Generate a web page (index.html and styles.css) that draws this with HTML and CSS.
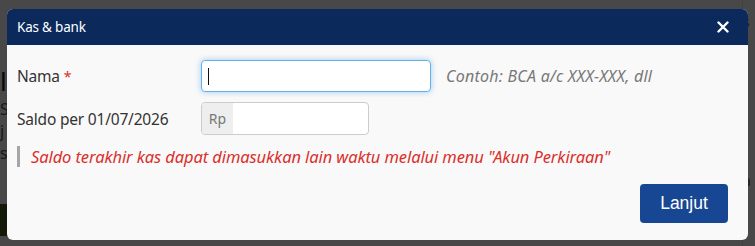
FILE: index.html
```html
<!DOCTYPE html>
<html>
<head>
<meta charset="utf-8">
<link rel="stylesheet" href="styles.css">
</head>
<body>
<div class="page">
  <div class="bg-left">
    <div class="bg-head">li</div>
    <div class="bg-line">S</div>
    <div class="bg-line">j</div>
    <div class="bg-line">s</div>
    <div class="bg-green"></div>
  </div>
  <div class="bg-right">
    <div class="bg-r1">s</div>
    <div class="bg-r2">a</div>
  </div>
</div>
<div class="backdrop"></div>
<div class="modal">
  <div class="modal-header">
    <span class="modal-title">Kas &amp; bank</span>
    <svg class="close" width="12" height="12" viewBox="0 0 12 12"><path d="M1.5 1.5 L10.5 10.5 M10.5 1.5 L1.5 10.5" stroke="#fff" stroke-width="2.4" stroke-linecap="round"/></svg>
  </div>
  <div class="modal-body">
    <div class="row row-nama">
      <label class="label">Nama <span class="req">*</span></label>
      <div class="input focus"><span class="caret"></span></div>
      <span class="hint">Contoh: BCA a/c XXX-XXX, dll</span>
    </div>
    <div class="row row-saldo">
      <label class="label">Saldo per 01/07/2026</label>
      <div class="input-group">
        <span class="addon">Rp</span>
        <span class="field"></span>
      </div>
    </div>
    <div class="note">Saldo terakhir kas dapat dimasukkan lain waktu melalui menu "Akun Perkiraan"</div>
    <div class="footer">
      <button class="btn">Lanjut</button>
    </div>
  </div>
</div>
</body>
</html>
```

FILE: styles.css
```css
html, body {
  margin: 0;
  padding: 0;
  width: 755px;
  height: 246px;
  overflow: hidden;
}
body {
  background: #f2f2f2;
  font-family: "Noto Sans", "Open Sans", sans-serif;
  position: relative;
}
.page {
  display: flex;
  justify-content: space-between;
  height: 246px;
}
.bg-left {
  width: 20px;
  padding-top: 64px;
  color: #333;
  font-family: "Noto Sans", sans-serif;
}
.bg-head {
  font-size: 26px;
  line-height: 34px;
  color: #222;
}
.bg-line {
  font-size: 16px;
  line-height: 22px;
  color: #555;
}
.bg-green {
  margin-top: 40px;
  height: 32px;
  background: #3d5a1a;
}
.bg-right {
  width: 12px;
  border-left: 1px solid #ddd;
  font-size: 14px;
  color: #666;
}
.bg-r1 { margin-top: 12px; }
.bg-r2 { margin-top: 140px; }
.backdrop {
  position: absolute;
  inset: 0;
  background: rgba(0, 0, 0, 0.7);
}
.modal {
  position: absolute;
  left: 7px;
  top: 9px;
  width: 741px;
  height: 231px;
  border-radius: 6px;
  overflow: hidden;
  background: #f9f9f9;
  display: flex;
  flex-direction: column;
}
.modal-header {
  background: #0b2a5b;
  height: 36px;
  padding: 0 10px;
  display: flex;
  align-items: center;
  justify-content: space-between;
  color: #fff;
}
.modal-title {
  font-size: 13.5px;
  letter-spacing: -0.2px;
}
.close {
  margin-right: 9px;
  display: block;
}
.modal-body {
  padding: 15px 10px 0 10px;
  flex: 1;
  display: flex;
  flex-direction: column;
}
.row {
  display: flex;
  align-items: center;
}
.label {
  width: 184px;
  font-size: 15.5px;
  color: #333;
  letter-spacing: -0.2px;
}
.req {
  color: #d9302c;
  font-size: 14px;
}
.input {
  width: 222px;
  height: 30px;
  border: 1px solid #66afe9;
  border-radius: 4px;
  background: #fff;
  box-shadow: 0 0 6px rgba(102, 175, 233, 0.6);
  display: flex;
  align-items: center;
  padding-left: 6px;
}
.caret {
  width: 1px;
  height: 17px;
  background: #111;
}
.hint {
  margin-left: 15px;
  font-style: italic;
  font-size: 16px;
  color: #777;
  letter-spacing: 0.25px;
}
.row-saldo {
  margin-top: 10px;
}
.input-group {
  display: flex;
  width: 166px;
  height: 31px;
  border: 1px solid #ccc;
  border-radius: 4px;
  overflow: hidden;
  background: #fff;
}
.addon {
  width: 31px;
  background: #eee;
  color: #777;
  font-size: 14px;
  display: flex;
  align-items: center;
  justify-content: center;
}
.field { flex: 1; }
.note {
  margin-top: 11px;
  border-left: 3px solid #a6a6a6;
  padding-left: 11px;
  height: 21px;
  line-height: 21px;
  font-style: italic;
  font-size: 16.5px;
  color: #d9302c;
  letter-spacing: -0.1px;
}
.footer {
  display: flex;
  justify-content: flex-end;
  margin-top: 17px;
  padding-right: 10px;
}
.btn {
  width: 88px;
  height: 39px;
  background: #174793;
  color: #fff;
  border: none;
  border-radius: 4px;
  font-family: "Liberation Sans", Arial, sans-serif;
  font-size: 17.5px;
  padding: 0;
}
```
